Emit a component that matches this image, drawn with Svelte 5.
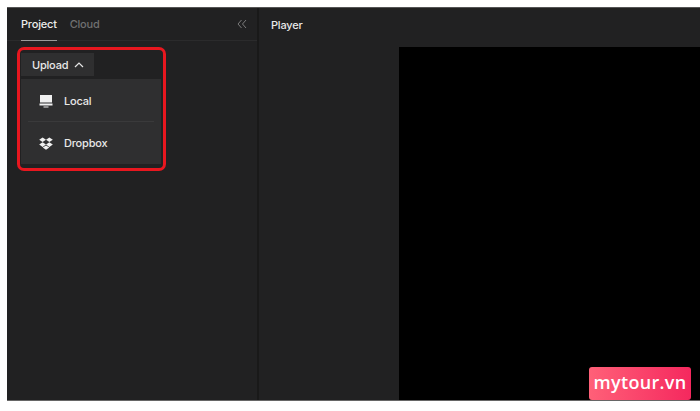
<script>
  const items = ['Local', 'Dropbox'];
</script>

<div class="page">
  <div class="frame">
    <aside class="side">
      <header class="tabs">
        <div class="tab active">Project</div>
        <div class="tab">Cloud</div>
        <svg class="collapse" width="10" height="10" viewBox="0 0 10 10" fill="none" stroke="#7b7b7b" stroke-width="1">
          <path d="M4.5 1 L1 5 L4.5 9 M9 1 L5.5 5 L9 9" />
        </svg>
      </header>
      <div class="upload">
        <button class="btn">Upload
          <svg width="10" height="6" viewBox="0 0 10 6" fill="none" stroke="#e6e6e6" stroke-width="1.2"><path d="M1 5 L5 1 L9 5" /></svg>
        </button>
        <div class="menu">
          {#each items as item, i}
            <div class="item" class:first={i === 0}>
              {#if i === 0}
                <svg width="14" height="14" viewBox="0 0 14 14" fill="#f0f0f0">
                  <path d="M1 1h12v7.5H1z" />
                  <path d="M0.5 9.5h13v2h-13z" />
                  <path d="M4.5 12.5h5v1h-5z" />
                </svg>
              {:else}
                <svg width="14" height="13" viewBox="0 0 14 13" fill="#f0f0f0">
                  <path d="M3.6 0.5 L7 2.8 L3.6 5.1 L0.2 2.8z" />
                  <path d="M10.4 0.5 L13.8 2.8 L10.4 5.1 L7 2.8z" />
                  <path d="M3.6 5.3 L7 7.6 L3.6 9.9 L0.2 7.6z" />
                  <path d="M10.4 5.3 L13.8 7.6 L10.4 9.9 L7 7.6z" />
                  <path d="M3.7 10.6 L7 8.5 L10.3 10.6 L7 12.8z" />
                </svg>
              {/if}
              <span>{item}</span>
            </div>
          {/each}
        </div>
        <div class="highlight"></div>
      </div>
    </aside>
    <main class="player">
      <header class="phead">Player</header>
      <div class="stage"><div class="video"></div></div>
    </main>
  </div>
  <div class="badge">mytour.vn</div>
</div>

<style>
  :global(body) { margin: 0; background: #fff; }
  .page {
    position: relative;
    width: 700px;
    height: 411px;
    box-sizing: border-box;
    padding: 7px 0 10px 7px;
    overflow: hidden;
    font-family: Inter, "Liberation Sans", sans-serif;
    letter-spacing: -0.2px;
  }
  .frame {
    display: flex;
    height: 100%;
    background: #212122;
    border-top: 1px solid #555;
    border-bottom: 1px solid #666;
    box-sizing: border-box;
  }
  .side {
    width: 250px;
    flex: none;
    border-right: 2px solid #191919;
  }
  .tabs {
    display: flex;
    align-items: center;
    gap: 13px;
    height: 32px;
    padding: 0 10px 0 14px;
    border-bottom: 1px solid #2b2b2c;
  }
  .tab {
    font-size: 11px;
    font-weight: 500;
    color: #707070;
    line-height: 32px;
    height: 33px;
    box-sizing: border-box;
  }
  .tab.active {
    color: #ececec;
    border-bottom: 1px solid #9a9a9a;
  }
  .collapse { margin-left: auto; }
  .upload {
    position: relative;
    padding: 12px 0 0 14px;
  }
  .btn {
    display: flex;
    align-items: center;
    gap: 6px;
    width: 73px;
    height: 23px;
    padding: 0 0 0 11px;
    border: 0;
    background: #2f2f30;
    color: #e8e8e8;
    font: inherit;
    font-size: 11px;
    font-weight: 500;
    letter-spacing: -0.2px;
  }
  .menu {
    width: 140px;
    height: 85px;
    margin-top: 3px;
    background: #2f2f30;
    box-sizing: border-box;
    padding: 0 7px;
  }
  .item {
    display: flex;
    align-items: center;
    gap: 11px;
    height: 42px;
    padding-left: 11px;
    color: #e8e8e8;
    font-size: 11px;
    font-weight: 500;
    box-sizing: border-box;
  }
  .item.first { height: 43px; padding-top: 1px; border-bottom: 1px solid #3a3a3b; }
  .highlight {
    position: absolute;
    left: 10px;
    top: 6px;
    width: 149px;
    height: 124px;
    box-sizing: border-box;
    border: 3px solid #e8171f;
    border-radius: 7px;
  }
  .player {
    flex: 1;
    display: flex;
    flex-direction: column;
    min-width: 0;
  }
  .phead {
    height: 39px;
    flex: none;
    padding: 0 12px;
    line-height: 34px;
    font-size: 11px;
    font-weight: 500;
    color: #e8e8e8;
    box-sizing: border-box;
  }
  .stage {
    flex: 1;
    padding-left: 140px;
    display: flex;
  }
  .video { flex: 1; background: #000; }
  .badge {
    position: absolute;
    left: 589px;
    top: 367px;
    width: 102px;
    height: 33px;
    border-radius: 3px;
    background: linear-gradient(90deg, #ff6078, #f5285e);
    color: #fff;
    font-family: "Open Sans", sans-serif;
    font-weight: 600;
    font-size: 18px;
    line-height: 31px;
    text-align: center;
    letter-spacing: 0.3px;
  }
</style>
